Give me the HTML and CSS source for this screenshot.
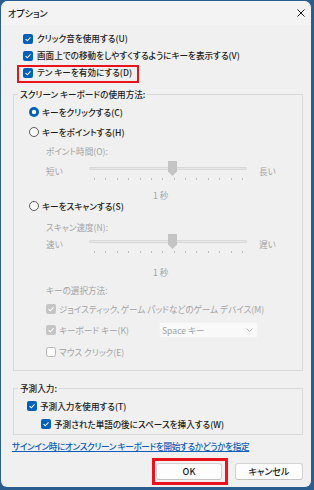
FILE: index.html
```html
<!DOCTYPE html>
<html lang="ja">
<head>
<meta charset="utf-8">
<title>オプション</title>
<link rel="stylesheet" href="styles.css">
</head>
<body>
<div class="win">
  <div class="titlebar">
    <span class="title">オプション</span>
    <svg class="close" width="8" height="8" viewBox="0 0 8 8"><path d="M0.5 0.5 L7.5 7.5 M7.5 0.5 L0.5 7.5" stroke="#1b1b1b" stroke-width="1" fill="none"/></svg>
  </div>

  <div class="top">
    <div class="row r17">
      <svg class="cb" viewBox="0 0 10 10"><rect width="10" height="10" rx="2" fill="#005fb8"/><path d="M2.6 5.1 L4.3 6.8 L7.5 3.4" stroke="#fff" stroke-width="1.1" fill="none"/></svg>
      <span>クリック音を使用する(U)</span>
    </div>
    <div class="row r17">
      <svg class="cb" viewBox="0 0 10 10"><rect width="10" height="10" rx="2" fill="#005fb8"/><path d="M2.6 5.1 L4.3 6.8 L7.5 3.4" stroke="#fff" stroke-width="1.1" fill="none"/></svg>
      <span>画面上での移動をしやすくするようにキーを表示する(V)</span>
    </div>
    <div class="row r17 hl">
      <svg class="cb" viewBox="0 0 10 10"><rect width="10" height="10" rx="2" fill="#005fb8"/><path d="M2.6 5.1 L4.3 6.8 L7.5 3.4" stroke="#fff" stroke-width="1.1" fill="none"/></svg>
      <span>テン キーを有効にする(D)</span>
    </div>
  </div>

  <fieldset class="grp g1">
    <legend>スクリーン キーボードの使用方法:</legend>
    <div class="gbody b1">
      <div class="row rad1">
        <svg class="rb" viewBox="0 0 10 10"><circle cx="5" cy="5" r="5" fill="#005fb8"/><circle cx="5" cy="5" r="2.2" fill="#fff"/></svg>
        <span>キーをクリックする(C)</span>
      </div>
      <div class="row rad2">
        <svg class="rb" viewBox="0 0 10 10"><circle cx="5" cy="5" r="4.5" fill="#fbfbfb" stroke="#5c5c5c" stroke-width="1"/></svg>
        <span>キーをポイントする(H)</span>
      </div>
      <div class="row sub dis lbl1">ポイント時間(O):</div>
      <div class="slider sub dis">
        <span class="slbl">短い</span>
        <div class="trackwrap">
          <div class="track"></div>
          <div class="thumb" style="left:79px"></div>
          <div class="ticks"><i></i><i></i><i></i><i></i><i></i><i></i><i></i><i></i><i></i><i></i><i></i><i></i><i></i><i></i></div>
        </div>
        <span class="slbl rlbl">長い</span>
      </div>
      <div class="row dis sec s1">1 秒</div>
      <div class="row rad3">
        <svg class="rb" viewBox="0 0 10 10"><circle cx="5" cy="5" r="4.5" fill="#fbfbfb" stroke="#5c5c5c" stroke-width="1"/></svg>
        <span>キーをスキャンする(S)</span>
      </div>
      <div class="row sub dis lbl2">スキャン速度(N):</div>
      <div class="slider sub dis">
        <span class="slbl">速い</span>
        <div class="trackwrap">
          <div class="track"></div>
          <div class="thumb" style="left:79px"></div>
          <div class="ticks"><i></i><i></i><i></i><i></i><i></i><i></i><i></i><i></i><i></i><i></i><i></i><i></i><i></i><i></i></div>
        </div>
        <span class="slbl rlbl">遅い</span>
      </div>
      <div class="row dis sec s2">1 秒</div>
      <div class="row sub dis lbl3">キーの選択方法:</div>
      <div class="row sub dis joy">
        <svg class="cb" viewBox="0 0 10 10"><rect width="10" height="10" rx="2" fill="#c5c5c5"/><path d="M2.6 5.1 L4.3 6.8 L7.5 3.4" stroke="#fff" stroke-width="1.1" fill="none"/></svg>
        <span>ジョイスティック、ゲーム パッドなどのゲーム デバイス(M)</span>
      </div>
      <div class="row sub dis kb">
        <span class="kblabel">
          <svg class="cb" viewBox="0 0 10 10"><rect width="10" height="10" rx="2" fill="#c5c5c5"/><path d="M2.6 5.1 L4.3 6.8 L7.5 3.4" stroke="#fff" stroke-width="1.1" fill="none"/></svg>
          <span>キーボード キー(K)</span>
        </span>
        <span class="dropdown">
          <span>Space キー</span>
          <svg class="chev" width="7" height="4" viewBox="0 0 7 4"><path d="M0.5 0.5 L3.5 3.5 L6.5 0.5" stroke="#b0b0b0" stroke-width="0.9" fill="none"/></svg>
        </span>
      </div>
      <div class="row sub dis mouse">
        <svg class="cb" viewBox="0 0 10 10"><rect x="0.5" y="0.5" width="9" height="9" rx="2" fill="#fdfdfd" stroke="#b3b3b3" stroke-width="1"/></svg>
        <span>マウス クリック(E)</span>
      </div>
    </div>
  </fieldset>

  <fieldset class="grp g2">
    <legend>予測入力:</legend>
    <div class="gbody b2">
      <div class="row p1">
        <svg class="cb" viewBox="0 0 10 10"><rect width="10" height="10" rx="2" fill="#005fb8"/><path d="M2.6 5.1 L4.3 6.8 L7.5 3.4" stroke="#fff" stroke-width="1.1" fill="none"/></svg>
        <span>予測入力を使用する(T)</span>
      </div>
      <div class="row p2">
        <svg class="cb" viewBox="0 0 10 10"><rect width="10" height="10" rx="2" fill="#005fb8"/><path d="M2.6 5.1 L4.3 6.8 L7.5 3.4" stroke="#fff" stroke-width="1.1" fill="none"/></svg>
        <span>予測された単語の後にスペースを挿入する(W)</span>
      </div>
    </div>
  </fieldset>

  <div class="linkrow"><a class="link" href="#">サインイン時にオンスクリーン キーボードを開始するかどうかを指定</a></div>

  <div class="btns">
    <button class="btn ok">OK</button>
    <button class="btn cancel">キャンセル</button>
  </div>
</div>
</body>
</html>
```

FILE: styles.css
```css
*, *::before, *::after { box-sizing: border-box; }

body {
  margin: 0;
  background: #2b5e8e;
  font-family: "Noto Sans CJK JP", "Noto Sans", sans-serif;
  font-size: 8.6px;
  font-weight: 500;
  font-feature-settings: "palt";
  color: #1b1b1b;
  line-height: 1;
}

.win {
  margin: 1px 3px 0 1px;
  height: 486px;
  background: #f0f0f0;
  border-radius: 7px 7px 6px 6px;
  overflow: hidden;
  display: flex;
  flex-direction: column;
}

.titlebar {
  height: 24px;
  flex: none;
  display: flex;
  align-items: center;
  justify-content: space-between;
  padding: 0 6px 0 7px;
  background: #f3f3f3;
}

.title { font-size: 9px; }

.close { display: block; }

.row {
  display: flex;
  align-items: center;
  white-space: nowrap;
}

.cb, .rb {
  width: 10px;
  height: 10px;
  flex: none;
  display: block;
}

.top {
  margin-top: 5px;
  padding-left: 22px;
}

.top .row { gap: 4px; }

.r17 { height: 17px; }

.hl { position: relative; }

.hl::after {
  content: "";
  position: absolute;
  left: -6px;
  top: 1px;
  width: 122px;
  height: 18px;
  border: 2px solid #e8131b;
}

.grp {
  margin: 0 0 0 12px;
  width: 290px;
  padding: 0 0 0 4px;
  border: 1px solid #d9d9d9;
  min-width: 0;
}

.grp legend {
  padding: 0 2px;
  height: 14px;
  line-height: 14px;
  color: #1b1b1b;
}

.g1 { margin-top: 6px; padding-bottom: 7px; }
.g2 { margin-top: 10px; padding-bottom: 1px; }

.gbody { display: flex; flex-direction: column; }

.b1 { padding-left: 11px; }
.b2 { padding-left: 9px; }

.gbody .row { gap: 3px; }

.sub { margin-left: 17px; }

.dis { color: #a4a4a4; font-weight: 400; }

.rad1 { height: 20px; margin-top: 1px; }
.rad2 { height: 20px; }
.lbl1 { height: 19px; }

.slider {
  display: grid;
  grid-template-columns: 43px 158px auto;
  height: 20px;
  align-items: start;
}

.slbl {
  margin-top: 5px;
  line-height: 10px;
}

.rlbl { margin-left: 12px; }

.trackwrap {
  position: relative;
  height: 20px;
}

.track {
  margin-top: 6px;
  height: 3px;
  background: #e6e6e6;
  border: 1px solid #d9d9d9;
  border-radius: 1px;
}

.thumb {
  position: absolute;
  top: 0;
  width: 9px;
  height: 15px;
  background: #c4c4c4;
  clip-path: polygon(0 0, 100% 0, 100% 70%, 50% 100%, 0 70%);
}

.ticks {
  margin: 8px 4px 0 5px;
  height: 2px;
  display: flex;
  justify-content: space-between;
}

.ticks i {
  display: block;
  width: 1px;
  height: 2px;
  background: #bdbdbd;
}

.sec { padding-left: 124px; }
.s1 { height: 12px; margin-top: 8px; }
.rad3 { height: 10px; }
.lbl2 { height: 14px; margin-top: 9px; }
.s2 { height: 14px; margin-top: 11px; }
.lbl3 { height: 14px; margin-top: 4px; }
.joy { height: 20px; margin-top: 2px; }
.kb { height: 22px; gap: 0; }
.mouse { height: 22px; }

.kblabel {
  width: 110px;
  display: flex;
  align-items: center;
  gap: 3px;
}

.dropdown {
  width: 99px;
  height: 16px;
  background: #f9f9f9;
  border: 1px solid #f2f2f2;
  border-radius: 2px;
  display: flex;
  align-items: center;
  justify-content: space-between;
  padding: 0 4px 0 2px;
  color: #a4a4a4;
}

.chev { display: block; }

.p1 { height: 18px; margin-top: 2px; }
.p2 { height: 18px; margin-left: 14px; }

.linkrow {
  margin: 4px 0 0 11px;
  height: 14px;
  display: flex;
  align-items: center;
}

.link {
  color: #0a5cb8;
  text-decoration: underline;
  white-space: nowrap;
  letter-spacing: -0.35px;
}

.btns {
  margin-top: 10px;
  display: flex;
  justify-content: flex-end;
  gap: 13px;
  padding-right: 8px;
}

.btn {
  font-family: inherit;
  font-size: 9px;
  font-weight: 500;
  font-feature-settings: "palt";
  color: #1b1b1b;
  height: 17px;
  background: #fdfdfd;
  border: 1px solid #d3d3d3;
  border-bottom-color: #c2c2c2;
  border-radius: 3px;
  padding: 0;
  line-height: 1;
}

.ok { width: 66px; position: relative; }
.cancel { width: 68px; }

.ok::after {
  content: "";
  position: absolute;
  left: -5px;
  top: -6px;
  width: 76px;
  height: 27px;
  border: 3px solid #e8131b;
}
```
